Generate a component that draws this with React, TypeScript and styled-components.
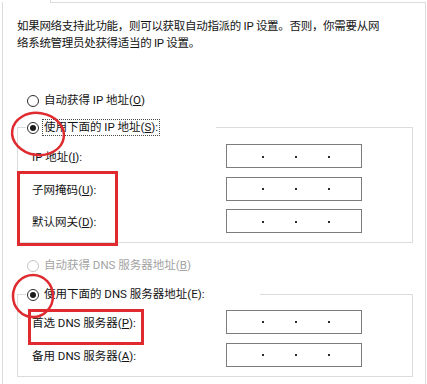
import styled, { createGlobalStyle, css } from 'styled-components';

const GlobalStyle = createGlobalStyle`
    * { box-sizing: border-box; }
    body {
        margin: 0;
        background: #ffffff;
    }
`;

const Screen = styled.div`
    position: relative;
    width: 427px;
    height: 384px;
    overflow: hidden;
    font-family: Roboto, "Noto Sans CJK SC", sans-serif;
    font-size: 11.5px;
    color: #141414;
`;

const Panel = styled.div`
    position: relative;
    margin: 2px 0 0 2px;
    width: 424px;
    height: 400px;
    border: 1px solid #dcdcdc;
    border-bottom: none;
    padding: 15px 0 0 14px;

    &::before {
        content: '';
        position: absolute;
        top: -1px;
        left: 0;
        width: 47px;
        height: 1px;
        background: #ffffff;
    }
    &::after {
        content: '';
        position: absolute;
        top: -3px;
        left: 47px;
        width: 1px;
        height: 3px;
        background: #dcdcdc;
    }
`;

const Intro = styled.p`
    margin: 0;
    line-height: 17px;
    letter-spacing: -0.3px;
    white-space: nowrap;
`;

const RadioRow = styled.div<{ $top: number }>`
    display: flex;
    align-items: center;
    height: 17px;
    margin-top: ${(p) => p.$top}px;
    padding-left: 10px;
`;

const RadioCircle = styled.span<{ $checked?: boolean; $disabled?: boolean }>`
    position: relative;
    flex: none;
    width: 12px;
    height: 12px;
    border-radius: 50%;
    border: 1px solid ${(p) => (p.$disabled ? '#c4c4c4' : '#2e2e2e')};
    background: #ffffff;

    ${(p) =>
        p.$checked &&
        css`
            &::after {
                content: '';
                position: absolute;
                left: 2px;
                top: 2px;
                width: 6px;
                height: 6px;
                border-radius: 50%;
                background: #1a1a1a;
            }
        `}
`;

const RadioLabel = styled.span<{ $focused?: boolean; $disabled?: boolean }>`
    margin-left: 3px;
    line-height: 15px;
    white-space: nowrap;
    color: ${(p) => (p.$disabled ? '#a3a3a3' : 'inherit')};
    padding: 0 1px;
    border: 1px solid transparent;

    ${(p) =>
        p.$focused &&
        css`
            border: 1px dotted #4a4a4a;
        `}
`;

const Key = styled.span`
    text-decoration: underline;
    text-underline-offset: 1px;
`;

const Group = styled.fieldset<{ $top: number; $padTop: number }>`
    margin: ${(p) => p.$top}px 0 0 0;
    width: 396px;
    min-width: 0;
    border: 1px solid #dcdcdc;
    padding: ${(p) => p.$padTop}px 0 9px 0;
`;

const Legend = styled.legend<{ $width: number }>`
    display: flex;
    align-items: center;
    height: 17px;
    width: ${(p) => p.$width}px;
    margin-left: 8px;
    padding: 0 0 0 1px;
`;

const Rows = styled.div<{ $gap: number }>`
    display: flex;
    flex-direction: column;
    gap: ${(p) => p.$gap}px;
    padding-left: 14px;
`;

const FieldRow = styled.div`
    display: flex;
    align-items: center;
    height: 24px;
`;

const FieldLabel = styled.span`
    width: 194px;
    white-space: nowrap;
`;

const IpBox = styled.div`
    display: flex;
    align-items: center;
    gap: 31px;
    width: 136px;
    height: 24px;
    padding-left: 35px;
    border: 1px solid #7c7c7c;
    background: #ffffff;
`;

const Dot = styled.span`
    width: 2px;
    height: 2px;
    margin-top: 1px;
    background: #2a2a2a;
`;

const RedBox = styled.div<{ $x: number; $y: number; $w: number; $h: number }>`
    position: absolute;
    left: ${(p) => p.$x}px;
    top: ${(p) => p.$y}px;
    width: ${(p) => p.$w}px;
    height: ${(p) => p.$h}px;
    border: 3px solid #df2a2f;
    pointer-events: none;
`;

const Marks = styled.svg`
    position: absolute;
    left: 0;
    top: 0;
    pointer-events: none;
`;

const IpField = ({ label }: { label: React.ReactNode }) => (
    <FieldRow>
        <FieldLabel>{label}</FieldLabel>
        <IpBox>
            <Dot />
            <Dot />
            <Dot />
        </IpBox>
    </FieldRow>
);

const App = (): JSX.Element => (
    <Screen>
        <GlobalStyle />
        <Panel>
            <Intro>
                如果网络支持此功能，则可以获取自动指派的 IP 设置。否则，你需要从网
                <br />
                络系统管理员处获得适当的 IP 设置。
            </Intro>

            <RadioRow $top={40}>
                <RadioCircle />
                <RadioLabel>
                    自动获得 IP 地址(<Key>O</Key>)
                </RadioLabel>
            </RadioRow>

            <Group $top={10} $padTop={8}>
                <Legend $width={190}>
                    <RadioCircle $checked />
                    <RadioLabel $focused>
                        使用下面的 IP 地址(<Key>S</Key>):
                    </RadioLabel>
                </Legend>
                <Rows $gap={8.5}>
                    <IpField label={<>IP 地址(<Key>I</Key>):</>} />
                    <IpField label={<>子网掩码(<Key>U</Key>):</>} />
                    <IpField label={<>默认网关(<Key>D</Key>):</>} />
                </Rows>
            </Group>

            <RadioRow $top={14}>
                <RadioCircle $disabled />
                <RadioLabel $disabled>
                    自动获得 DNS 服务器地址(<Key>B</Key>)
                </RadioLabel>
            </RadioRow>

            <Group $top={12} $padTop={6.5}>
                <Legend $width={234}>
                    <RadioCircle $checked />
                    <RadioLabel>使用下面的 DNS 服务器地址(E):</RadioLabel>
                </Legend>
                <Rows $gap={9}>
                    <IpField label={<>首选 DNS 服务器(<Key>P</Key>):</>} />
                    <IpField label={<>备用 DNS 服务器(<Key>A</Key>):</>} />
                </Rows>
            </Group>
        </Panel>

        <RedBox $x={17} $y={171} $w={101} $h={75} />
        <RedBox $x={28} $y={309} $w={116} $h={36} />

        <Marks width="427" height="384" viewBox="0 0 427 384">
            <ellipse
                cx="38"
                cy="134"
                rx="26"
                ry="21"
                transform="rotate(8 38 134)"
                fill="none"
                stroke="#df2a2f"
                strokeWidth="2.5"
            />
            <ellipse cx="33" cy="296" rx="20" ry="21" fill="none" stroke="#df2a2f" strokeWidth="2.5" />
        </Marks>
    </Screen>
);

export default App;
